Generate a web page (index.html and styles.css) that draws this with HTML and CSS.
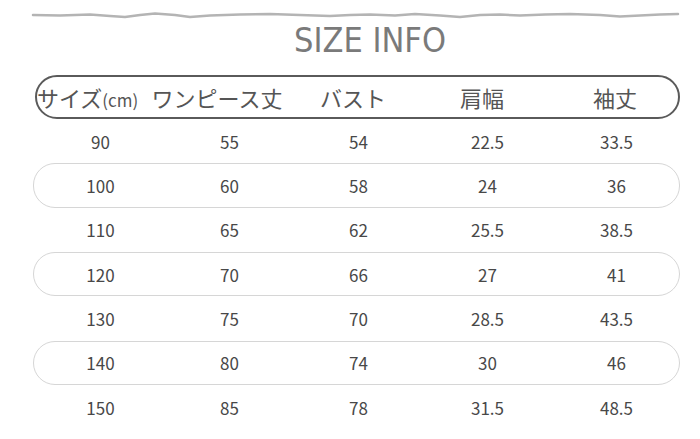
FILE: index.html
```html
<!DOCTYPE html>
<html lang="ja">
<head>
<meta charset="utf-8">
<link rel="stylesheet" href="styles.css">
</head>
<body>
<div class="page">
  <svg class="wave" width="700" height="20" viewBox="0 0 700 20">
    <polyline points="33,15 60,15.5 90,14.5 110,16 125,17 140,15 155,13.5 175,15 190,17 210,15.5 240,14.5 270,14 300,15 330,16 350,15 370,14.5 395,15.5 415,14 440,15.5 460,17 480,15 500,14.5 520,15.5 545,14.5 570,14 600,15 620,16.5 640,15.5 660,14.5 678,14" fill="none" stroke="#b4b4b4" stroke-width="2.5" stroke-linejoin="round" stroke-linecap="round"/>
  </svg>
  <h1 class="title">SIZE INFO</h1>
  <div class="table">
    <div class="head">
      <span>サイズ<small>(cm)</small></span>
      <span>ワンピース丈</span>
      <span>バスト</span>
      <span>肩幅</span>
      <span>袖丈</span>
    </div>
    <div class="row"><span>90</span><span>55</span><span>54</span><span>22.5</span><span>33.5</span></div>
    <div class="row pill"><span>100</span><span>60</span><span>58</span><span>24</span><span>36</span></div>
    <div class="row"><span>110</span><span>65</span><span>62</span><span>25.5</span><span>38.5</span></div>
    <div class="row pill"><span>120</span><span>70</span><span>66</span><span>27</span><span>41</span></div>
    <div class="row"><span>130</span><span>75</span><span>70</span><span>28.5</span><span>43.5</span></div>
    <div class="row pill"><span>140</span><span>80</span><span>74</span><span>30</span><span>46</span></div>
    <div class="row"><span>150</span><span>85</span><span>78</span><span>31.5</span><span>48.5</span></div>
  </div>
</div>
</body>
</html>
```
FILE: styles.css
```css
html, body {
  margin: 0;
  padding: 0;
  background: #ffffff;
}
.page {
  width: 700px;
  height: 439px;
  overflow: hidden;
  font-family: "Noto Sans CJK JP", "Noto Sans", sans-serif;
  color: #444;
}
.wave {
  display: block;
}
.title {
  margin: 0;
  padding-left: 40px;
  font-family: "DejaVu Sans Condensed", "DejaVu Sans", sans-serif;
  font-weight: normal;
  font-size: 34px;
  line-height: 40px;
  height: 40px;
  text-align: center;
  color: #7a7a7a;
}
.table {
  margin: 15px 0 0 33px;
  width: 647px;
}
.head {
  box-sizing: border-box;
  margin-left: 2px;
  height: 44px;
  border: 2px solid #5a5a5a;
  border-radius: 22px;
  display: grid;
  grid-template-columns: 100px 160px 112px 146px 120px;
  align-items: center;
  justify-items: center;
  font-size: 22px;
  font-weight: 400;
  color: #555;
}
.head span {
  line-height: 1;
  white-space: nowrap;
}
.head small {
  font-size: 17px;
}
.head span:first-child {
  justify-self: start;
  margin-left: 0;
}
.row {
  box-sizing: border-box;
  height: 44.33px;
  border: 1px solid transparent;
  border-radius: 22px;
  padding-left: 2px;
  display: grid;
  grid-template-columns: repeat(5, 129px);
  align-items: center;
  justify-items: center;
  font-size: 17px;
  color: #484848;
}
.row span {
  line-height: 1;
}
.row.pill {
  border-color: #d6d6d6;
}
```
